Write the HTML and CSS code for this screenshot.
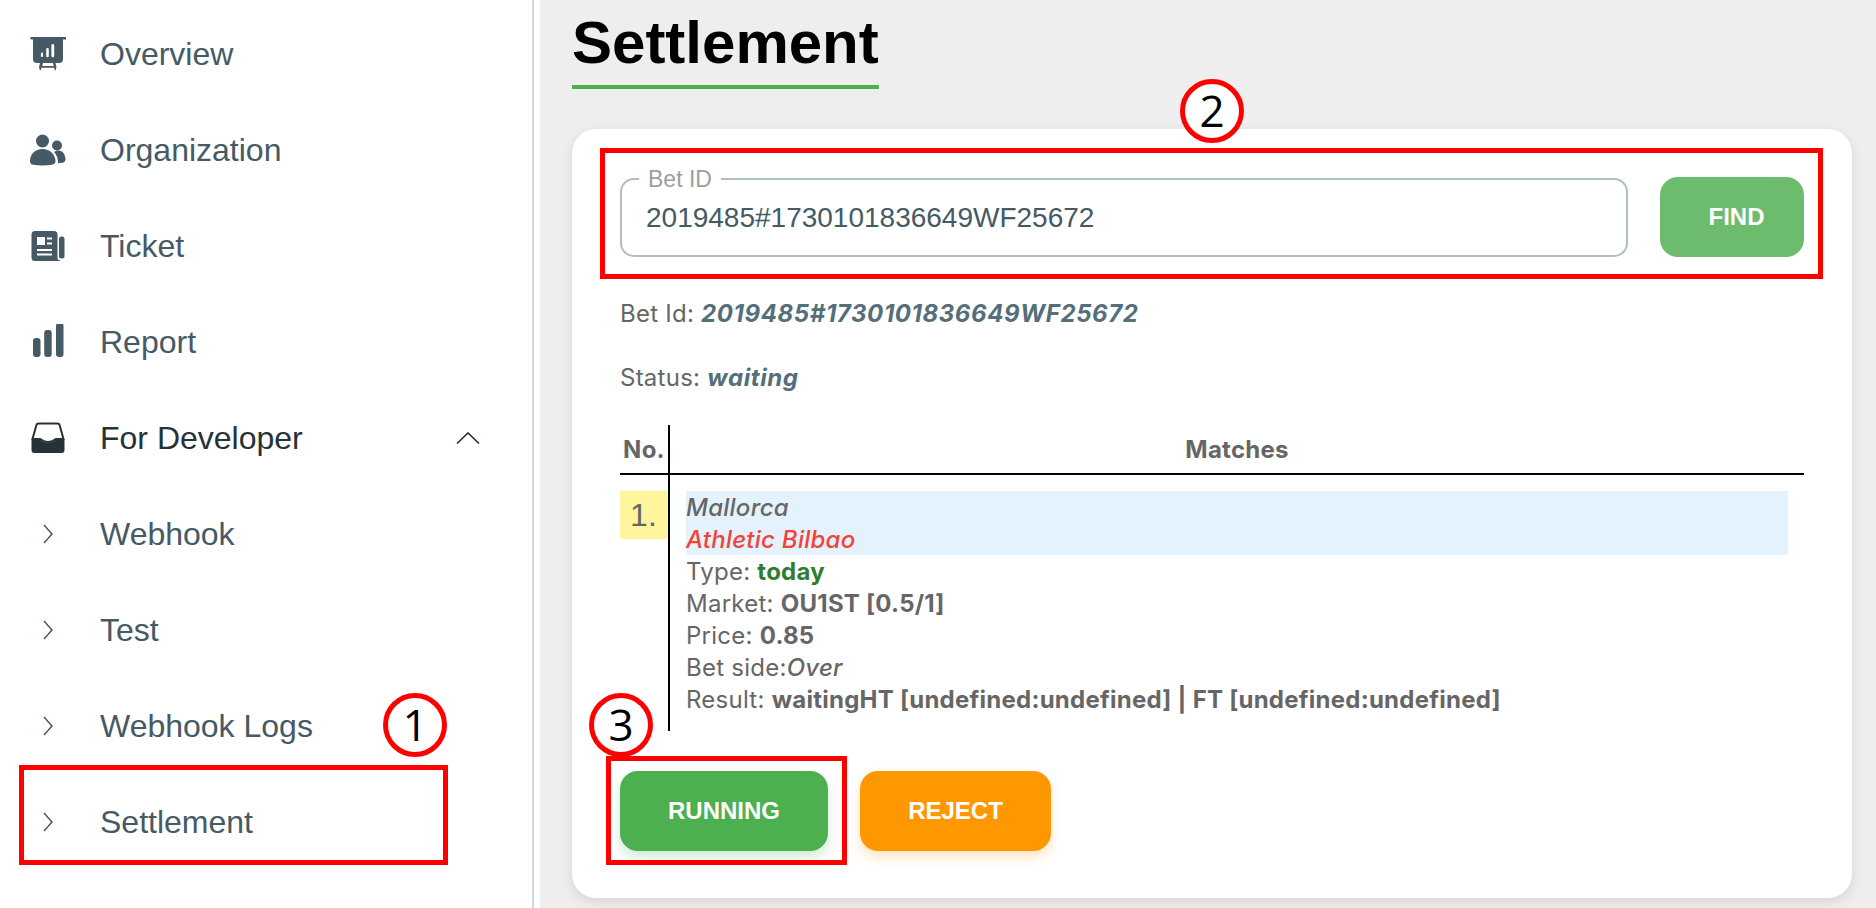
FILE: index.html
```html
<!DOCTYPE html>
<html lang="en">
<head>
    <meta charset="UTF-8">
    <meta name="viewport" content="width=device-width, initial-scale=1.0">
    <title>Settlement</title>
    <link rel="stylesheet" href="styles.css">
</head>
<body>

    <aside class="sidebar">
        <ul class="nav">
            <li class="nav-item">
                <svg class="nav-icon" viewBox="0 0 36 36">
                    <path d="M1.500 1h34a.6.6 0 0 1 0 2.600H33V23a4 4 0 0 1-4 4H25.500l1 4.300-.9 3h-.9l-.5-2.500H11.300l-.5 2.500h-.9l-.9-3 1-4.300H7a4 4 0 0 1-4-4V3.600H1.500a.6.6 0 0 1 0-2.600zM13 27l-.7 3H23.700L23 27zM12 16.500a1.100 1.100 0 0 0-1.100 1.100v2.400a1.100 1.100 0 0 0 2.200 0v-2.400A1.100 1.100 0 0 0 12 16.500zM17.500 12a1.300 1.300 0 0 0-1.300 1.300V20a1.300 1.300 0 0 0 2.600 0v-6.700A1.300 1.300 0 0 0 17.500 12zM22.800 8a1.400 1.400 0 0 0-1.400 1.400V20a1.400 1.400 0 0 0 2.800 0V9.400A1.400 1.400 0 0 0 22.800 8z" fill-rule="evenodd"/>
                </svg>
                <span>Overview</span>
            </li>
            <li class="nav-item">
                <svg class="nav-icon" viewBox="0 0 36 36">
                    <circle cx="12.500" cy="9" r="6.500"/>
                    <circle cx="27" cy="13.500" r="5"/>
                    <path d="M0 29c0-7 5-12 12.500-12S25 22 25.500 29c.1 2-1.500 3.500-3.500 3.800-6 .8-13 .8-19 0C1 32.500 0 31 0 29z"/>
                    <path d="M24 20c1.500-1.200 3.300-1.800 5-1.500 3.500.5 6 3.500 6.500 8 .2 2-.8 4-3 4.300l-4.500.5c.2-4.500-1.300-8.500-4-11.300z"/>
                </svg>
                <span>Organization</span>
            </li>
            <li class="nav-item">
                <svg class="nav-icon" viewBox="0 0 36 36">
                    <path d="M5 3h19a3.500 3.500 0 0 1 3.500 3.500V30c0 1.500 1 2.200 2.200 2.300.6.1.6.7 0 .7H5a3.500 3.500 0 0 1-3.500-3.500v-23A3.500 3.500 0 0 1 5 3zM7 9v8h8V9zM17 9.500v2h5v-2zM17 14.500v2h5v-2zM7 21v2h15v-2zM7 25.500v2h15v-2z" fill-rule="evenodd"/>
                    <rect x="29" y="8.500" width="5.500" height="22" rx="2.500"/>
                </svg>
                <span>Ticket</span>
            </li>
            <li class="nav-item">
                <svg class="nav-icon" viewBox="0 0 36 36">
                    <rect x="3" y="14" width="7.500" height="19" rx="3"/>
                    <rect x="14.200" y="6" width="7.500" height="27" rx="3"/>
                    <rect x="26" y="-1" width="7.500" height="34" rx="3"/>
                </svg>
                <span>Report</span>
            </li>
            <li class="nav-item nav-open">
                <svg class="nav-icon" viewBox="0 0 36 36">
                    <path d="M8.500 3.500h19c1 0 1.800.6 2.100 1.500L33.500 19H26c-1.500 0-2 3-8 3s-6.500-3-8-3H2.500L6.400 5c.3-.9 1.100-1.500 2.100-1.500z" fill="none" stroke="currentColor" stroke-width="2"/>
                    <path d="M1.500 20c0-.5.4-1 1-1h6c2 0 3 3.500 9.500 3.500S25.500 19 27.500 19h6c.6 0 1 .5 1 1v10a3 3 0 0 1-3 3h-27a3 3 0 0 1-3-3z"/>
                </svg>
                <span>For Developer</span>
                <svg class="caret-up" viewBox="0 0 24 12">
                    <path d="M1 11.500 12 1l11 10.500"/>
                </svg>
            </li>
            <li class="nav-item">
                <svg class="caret-right" viewBox="0 0 10 20">
                    <path d="M1 1l8 9-8 9"/>
                </svg>
                <span>Webhook</span>
            </li>
            <li class="nav-item">
                <svg class="caret-right" viewBox="0 0 10 20">
                    <path d="M1 1l8 9-8 9"/>
                </svg>
                <span>Test</span>
            </li>
            <li class="nav-item">
                <svg class="caret-right" viewBox="0 0 10 20">
                    <path d="M1 1l8 9-8 9"/>
                </svg>
                <span>Webhook Logs</span>
            </li>
            <li class="nav-item">
                <svg class="caret-right" viewBox="0 0 10 20">
                    <path d="M1 1l8 9-8 9"/>
                </svg>
                <span>Settlement</span>
            </li>
        </ul>
    </aside>

    <main class="content">
        <h1 class="page-title">Settlement</h1>

        <section class="card">
            <div class="search-row">
                <div class="field">
                    <span class="field-label">Bet ID</span>
                    <div class="field-value">2019485#1730101836649WF25672</div>
                </div>
                <button class="btn btn-find">FIND</button>
            </div>

            <p class="info info-first">Bet Id: <em>2019485#1730101836649WF25672</em></p>
            <p class="info">Status: <em>waiting</em></p>

            <table class="matches">
                <thead>
                    <tr>
                        <th class="col-no">No.</th>
                        <th>Matches</th>
                    </tr>
                </thead>
                <tbody>
                    <tr>
                        <td class="col-no"><div class="row-no">1.</div></td>
                        <td class="match">
                            <div class="line team-home">Mallorca</div>
                            <div class="line team-away">Athletic Bilbao</div>
                            <div class="line">Type: <b class="type-today">today</b></div>
                            <div class="line">Market: <b>OU1ST [0.5/1]</b></div>
                            <div class="line">Price: <b>0.85</b></div>
                            <div class="line">Bet side:<i>Over</i></div>
                            <div class="line">Result: <b>waitingHT [undefined:undefined] | FT [undefined:undefined]</b></div>
                        </td>
                    </tr>
                </tbody>
            </table>

            <div class="actions">
                <button class="btn btn-running">RUNNING</button>
                <button class="btn btn-reject">REJECT</button>
            </div>
        </section>
    </main>

    <!-- Red markers drawn on top of the screenshot -->
    <div class="mark-box mark-box-1"></div>
    <div class="mark-box mark-box-2"></div>
    <div class="mark-box mark-box-3"></div>
    <div class="mark-num mark-num-1">1</div>
    <div class="mark-num mark-num-2">2</div>
    <div class="mark-num mark-num-3">3</div>

</body>
</html>
```

FILE: styles.css
```css
* {
    box-sizing: border-box;
}
body {
    font-family: "Liberation Sans", Arial, sans-serif;
    background-color: #eeeeee;
    margin: 0;
    display: flex;
    height: 908px;
    overflow: hidden;
    position: relative;
}
.sidebar {
    width: 540px;
    flex-shrink: 0;
    background-color: white;
    padding-right: 6px;
}
.nav {
    list-style: none;
    margin: 0;
    padding: 6px 0 0;
    height: 100%;
    border-right: 2px solid #cfd8dc;
}
.nav-item {
    height: 96px;
    display: flex;
    align-items: center;
    padding-left: 30px;
    font-size: 32px;
    color: #455a64;
}
.nav-item span {
    margin-left: 34px;
}
.nav-open {
    color: #263238;
}
.nav-icon {
    width: 36px;
    height: 36px;
    fill: currentColor;
    flex-shrink: 0;
}
.caret-right {
    width: 10px;
    height: 20px;
    margin-left: 13px;
    margin-right: 13px;
    fill: none;
    stroke: currentColor;
    stroke-width: 1.5;
    flex-shrink: 0;
}
.caret-up {
    width: 24px;
    height: 12px;
    margin-left: auto;
    margin-right: 52px;
    fill: none;
    stroke: currentColor;
    stroke-width: 1.6;
}
.content {
    flex: 1;
    padding: 0 24px 0 32px;
}
.page-title {
    display: inline-block;
    margin: 0 0 40px;
    font-size: 60px;
    line-height: 85px;
    font-weight: bold;
    color: black;
    border-bottom: 4px solid #4caf50;
}
.card {
    background-color: white;
    border-radius: 24px;
    box-shadow: 0 4px 12px rgba(0, 0, 0, 0.1);
    padding: 48px;
    height: 769px;
    font-family: Inter, sans-serif;
    font-size: 24px;
    letter-spacing: 0.25px;
    color: #666666;
}
.search-row {
    display: flex;
    gap: 32px;
    height: 80px;
    letter-spacing: normal;
}
.field {
    flex: 1;
    position: relative;
    margin-top: 1px;
    border: 2px solid #b0bec5;
    border-radius: 14px;
    display: flex;
    align-items: center;
    padding-left: 24px;
}
.field-label {
    position: absolute;
    top: -14px;
    left: 17px;
    padding: 0 9px;
    background-color: white;
    font-family: "Liberation Sans", Arial, sans-serif;
    font-size: 23px;
    line-height: 26px;
    color: #9e9e9e;
}
.field-value {
    font-family: "Liberation Sans", Arial, sans-serif;
    font-size: 28px;
    color: #455a64;
}
.btn {
    border: none;
    border-radius: 18px;
    color: white;
    font-family: "Liberation Sans", Arial, sans-serif;
    font-size: 24px;
    font-weight: bold;
    height: 80px;
    letter-spacing: normal;
}
.btn-find {
    width: 144px;
    padding-left: 15px;
    background-color: #6dbb6d;
}
.info {
    margin: 0;
    line-height: 32px;
}
.info-first {
    margin-top: 41px;
}
.info + .info {
    margin-top: 32px;
}
.info em {
    color: #546e7a;
    font-weight: 700;
    letter-spacing: 0.6px;
}
.matches {
    width: 100%;
    margin-top: 31px;
    border-collapse: separate;
    border-spacing: 0;
}
.matches th {
    height: 50px;
    padding: 0;
    font-weight: 700;
    border-bottom: 2px solid black;
}
.matches td {
    padding: 16px;
    vertical-align: top;
}
.matches .col-no {
    width: 50px;
    padding: 0;
    border-right: 2px solid black;
}
.matches td.col-no {
    padding-top: 16px;
}
.row-no {
    height: 48px;
    margin-right: 1px;
    background-color: #fff59d;
    font-family: "Liberation Sans", Arial, sans-serif;
    font-size: 32px;
    line-height: 48px;
    text-align: center;
}
/* taller line-height than box pushes the text down 1px */
.line {
    height: 32px;
    line-height: 34px;
}
.team-home,
.team-away {
    background-color: #e3f2fd;
    font-style: italic;
    font-weight: 500;
}
.team-away {
    color: #f44336;
}
.match b {
    font-weight: 700;
}
.match i {
    font-weight: 500;
}
.type-today {
    color: #2e7d32;
}
.actions {
    display: flex;
    gap: 32px;
    margin-top: 40px;
}
.btn-running {
    width: 208px;
    background-color: #4caf50;
    box-shadow: 0 6px 12px rgba(76, 175, 80, 0.25);
}
.btn-reject {
    width: 191px;
    background-color: #ff9800;
    box-shadow: 0 6px 12px rgba(255, 152, 0, 0.25);
}
.mark-box {
    position: absolute;
    border: 5px solid #ff0000;
}
.mark-box-1 {
    left: 19px;
    top: 765px;
    width: 429px;
    height: 100px;
}
.mark-box-2 {
    left: 600px;
    top: 148px;
    width: 1223px;
    height: 131px;
}
.mark-box-3 {
    left: 606px;
    top: 756px;
    width: 241px;
    height: 109px;
}
.mark-num {
    position: absolute;
    width: 64px;
    height: 64px;
    border: 5px solid #ff0000;
    border-radius: 50%;
    background-color: white;
    font-family: "Open Sans", sans-serif;
    font-size: 44px;
    line-height: 52px;
    text-align: center;
    color: black;
}
.mark-num-1 {
    left: 383px;
    top: 693px;
}
.mark-num-2 {
    left: 1180px;
    top: 79px;
}
.mark-num-3 {
    left: 589px;
    top: 693px;
}
```
